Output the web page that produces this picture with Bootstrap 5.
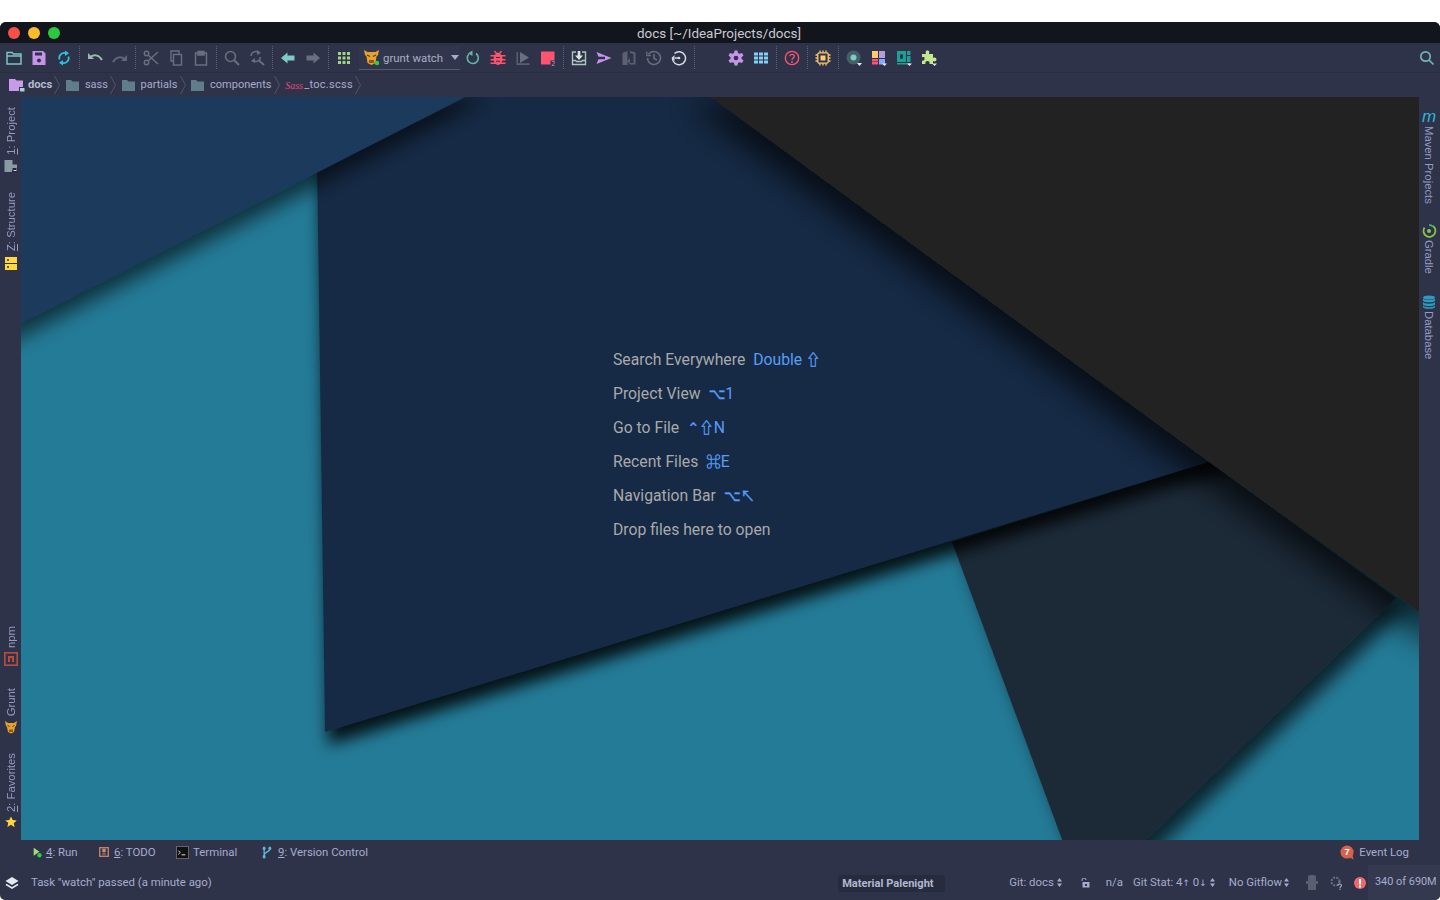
<!DOCTYPE html>
<html lang="en">
<head>
<meta charset="utf-8">
<title>docs</title>
<link href="https://cdn.jsdelivr.net/npm/bootstrap@5.3.0/dist/css/bootstrap.min.css" rel="stylesheet">
<style>
html,body{height:100%;margin:0;background:#fff;overflow:hidden}
body{padding-top:22px;font-family:Roboto,"Liberation Sans",sans-serif}
.ide-window{height:878px;background:#2f3349;border-radius:6px 6px 5px 5px;overflow:hidden;color:#a6accd;font-size:11.4px}
.title-strip{height:21px;flex:none;background:#12151c;color:#c9cbd2;font-size:13.45px;padding-top:3px}
.lights{width:120px;padding-left:8px;gap:8px;margin-top:-3px}
.light{width:12px;height:12px;border-radius:50%}
.light-red{background:#f5504a}.light-amber{background:#fdbb2c}.light-green{background:#2cc83f}
.title-side{width:122px}
.tool-strip{height:30px;flex:none;padding-left:1.5px;padding-right:5px;border-bottom:1px solid #292d40}
.slot{width:25px;height:100%;flex:none}
.slot svg{width:16px;height:16px;display:block}
.rule{width:6px;flex:none;display:flex;justify-content:center;align-items:center;height:100%}
.rule::before{content:"";display:block;height:23px;border-left:1px dotted #5c6178}
.tool-gap{width:26px;flex:none}
.combo{width:101px;height:24px;margin-left:2.5px;margin-top:1px;flex:none;background:#32364c;border-bottom:1px solid #555a72;color:#a9aec8;padding-left:4px;gap:3px;white-space:nowrap}
.combo svg{width:17px;height:17px;flex:none}
.combo span{padding-top:2px}
.caret-down{width:0;height:0;border-left:4.5px solid transparent;border-right:4.5px solid transparent;border-top:5px solid #a6accd;margin-left:5px}
.crumb-strip{height:24px;flex:none;padding-left:9px;color:#a6accd;font-size:11px}
.crumb{height:100%}
.crumb span,.crumb b{padding-top:1px}
.crumb svg.fold{width:13px;height:12px;margin-right:6px;margin-left:5.500px}
.crumb b{font-weight:700;color:#b4b9d2;font-size:11.200px}
.root-icon{margin-right:3px}
.crumb .sass-mark{width:15px;margin-left:5.500px;margin-right:4px;padding-top:0;color:#e0477f;font-family:"Liberation Serif",serif;font-style:italic;font-size:10px;white-space:nowrap;flex:none}
.file-name{letter-spacing:.3px}
.chev{width:6px;height:24px;margin-left:2.200px}
.body-row{flex:1 1 auto;min-height:0}
.side-bar{width:21px;flex:none;padding:10px 0 12px 1px;color:#949cc2;font-family:"Liberation Sans",sans-serif;font-size:11.300px}
.side-right{width:21px;flex:none;padding:13px 1px 0 0;color:#949cc2;font-family:"Liberation Sans",sans-serif;font-size:11.300px;gap:20.500px}
.vert-up{writing-mode:vertical-rl;transform:rotate(180deg);line-height:20px}
.vert-down{writing-mode:vertical-rl;line-height:20px}
.side-bar svg,.side-right svg{width:14px;height:14px;display:block;overflow:visible}
.side-bar svg.star-mark{width:12px;height:12px}
.top-stack{gap:19px}
.low-stack{gap:19px}
.npm-gap{margin-bottom:3px}
.pair{gap:4px}
.pair-wide{gap:6px}
.pair-tight{gap:2px}
.canvas-zone{flex:1 1 auto;position:relative;overflow:hidden;background:#247b97;padding-top:245.500px;padding-right:6px}
.wall{position:absolute;inset:0;width:100%;height:100%}
.hints{position:relative;width:208px;color:#a9a9a9;font-size:15.750px;line-height:34px;white-space:nowrap}
.hints>div{height:34px}
.hints span{color:#589df6;margin-left:4px}
.sym{font-family:"Noto Sans CJK JP","DejaVu Sans",sans-serif;font-style:normal;font-size:14.500px;line-height:0;-webkit-text-stroke:.4px #589df6}
.tabs-strip{height:25px;flex:none;padding-left:33px;padding-right:31px;color:#a6accd}
.tabs-strip u{text-underline-offset:1px}
.tab-run{width:66px;gap:3px}.tab-run svg{width:10px;height:11px}
.tab-todo{width:77px;gap:5px}.tab-todo svg{width:10px;height:10px}
.tab-term{width:86px;gap:4px}.tab-term svg{width:13px;height:13px}
.tab-vcs{gap:6px}.tab-vcs svg{width:10px;height:13px}
.tab-log{gap:4px}.tab-log svg{width:15px;height:15px}
.status-strip{height:35px;flex:none;padding-left:5px;color:#a6accd}
.status-strip svg{display:block;flex:none}
.task-text{margin-left:12px}
.theme-chip{background:#272b3e;border-radius:3px;width:107px;height:17px;font-weight:700;color:#b2b7d0;padding-left:4px;margin-left:auto;font-size:11.100px;line-height:18px;margin-top:1px;white-space:nowrap}
.git-branch{margin-left:64px;gap:3px;white-space:nowrap}
.lock-mark{margin-left:18px}
.na-text{margin-left:16px}
.git-stat{margin-left:10px;gap:3px;white-space:nowrap}
.arrow-mark{font-family:"DejaVu Sans",sans-serif;font-style:normal;font-size:9px}
.git-flow{margin-left:14px;gap:2px;white-space:nowrap}
.ghost-mark{margin-left:17px}
.gear-mark{margin-left:11px}
.err-mark{margin-left:10px}
.mem{background:#353950;height:100%;width:72px;padding-left:7px;margin-left:2px;color:#a6accd;white-space:nowrap;flex:none;font-size:10.900px}
</style>
</head>
<body>
<div class="ide-window d-flex flex-column">

  <div class="title-strip d-flex align-items-center">
    <div class="lights d-flex align-items-center">
      <div class="light light-red"></div>
      <div class="light light-amber"></div>
      <div class="light light-green"></div>
    </div>
    <div class="flex-grow-1 text-center">docs [~/IdeaProjects/docs]</div>
    <div class="title-side"></div>
  </div>

  <div class="tool-strip d-flex align-items-center">
    <div class="slot d-flex align-items-center justify-content-center"><svg viewBox="0 0 16 16"><path d="M1 14V2.5h5L7.5 4H15v10zM1 6h14" fill="none" stroke="#7cc5c4" stroke-width="1.5"/></svg></div>
    <div class="slot d-flex align-items-center justify-content-center"><svg viewBox="0 0 16 16"><path d="M1.5 1h10.5l2.500 2.500V15h-13z" fill="#c792ea"/><rect x="4" y="2.500" width="7" height="3" fill="#2f3349"/><circle cx="8" cy="10.500" r="2" fill="#2f3349"/></svg></div>
    <div class="slot d-flex align-items-center justify-content-center"><svg viewBox="0 0 16 16"><path d="M3.500 9.500A5 5 0 0 1 10 3.300M12.500 6.500A5 5 0 0 1 6 12.700" fill="none" stroke="#2bc4e2" stroke-width="1.700"/><path d="M9 .5l4 2.800-4 2.700zM7 10l-4 2.700 4 2.800z" fill="#2bc4e2"/></svg></div>
    <div class="rule"></div>
    <div class="slot d-flex align-items-center justify-content-center"><svg viewBox="0 0 16 16"><path d="M1 3v6h6z" fill="#9ab8b0"/><path d="M3 7.500C6 4 12 4.500 15 10" fill="none" stroke="#9ab8b0" stroke-width="2"/></svg></div>
    <div class="slot d-flex align-items-center justify-content-center"><svg viewBox="0 0 16 16"><path d="M15 5v6H9z" fill="#616678"/><path d="M13 9.500C10 6 4 6.500 1 12" fill="none" stroke="#616678" stroke-width="2"/></svg></div>
    <div class="rule"></div>
    <div class="slot d-flex align-items-center justify-content-center"><svg viewBox="0 0 16 16" fill="none" stroke="#696e80" stroke-width="1.500"><circle cx="3.500" cy="3.500" r="2.200"/><circle cx="3.500" cy="12.500" r="2.200"/><path d="M5 5l10 9M5 11L15 2"/></svg></div>
    <div class="slot d-flex align-items-center justify-content-center"><svg viewBox="0 0 16 16" fill="none" stroke="#696e80" stroke-width="1.400"><path d="M11 4V1H3v10h2"/><rect x="5.500" y="4.500" width="8" height="10.500"/></svg></div>
    <div class="slot d-flex align-items-center justify-content-center"><svg viewBox="0 0 16 16" fill="none" stroke="#696e80" stroke-width="1.500"><path d="M5 3H2.500v12h11V3H11"/><path d="M5 1.500h6V5H5z" fill="#696e80"/></svg></div>
    <div class="rule"></div>
    <div class="slot d-flex align-items-center justify-content-center"><svg viewBox="0 0 16 16" fill="none" stroke="#696e80" stroke-width="1.600"><circle cx="6.500" cy="6.500" r="5"/><path d="M10 10l5 5" stroke-width="2"/></svg></div>
    <div class="slot d-flex align-items-center justify-content-center"><svg viewBox="0 0 16 16" fill="none" stroke="#696e80" stroke-width="1.500"><path d="M2 6A5 5 0 0 1 10 2.500M11.500 7A5 5 0 0 1 3.500 10.500"/><path d="M10 10.500l5 4.500" stroke-width="2"/><path d="M8 0l4 3-4 2zM6 8l-4 3 4 2z" fill="#696e80" stroke="none"/></svg></div>
    <div class="rule"></div>
    <div class="slot d-flex align-items-center justify-content-center"><svg viewBox="0 0 16 16"><path d="M1 8l6.500-5.500V5.500h7v5h-7v3z" fill="#80cbc4"/></svg></div>
    <div class="slot d-flex align-items-center justify-content-center"><svg viewBox="0 0 16 16"><path d="M15 8L8.500 2.500V5.500h-7v5h7v3z" fill="#696e80"/></svg></div>
    <div class="rule"></div>
    <div class="slot d-flex align-items-center justify-content-center"><svg viewBox="0 0 16 16" fill="#a0d68a"><path d="M2 2h3v3H2zM6.500 2h3v3h-3zM11 2h3v3h-3zM2 6.500h3v3H2zM6.500 6.500h3v3h-3zM11 6.500h3v3h-3zM2 11h3v3H2zM6.500 11h3v3h-3zM11 11h3v3h-3z"/></svg></div>
    <div class="combo d-flex align-items-center">
      <svg viewBox="0 0 17 17"><path d="M1 1l3.500 2h8L16 1l-1 5-1.500 1.500-1 6.500-4 2-4-2-1-6.500L2 6z" fill="#e4a32c"/><path d="M4 6l3 1.500M13 6l-3 1.500" stroke="#5b3a10" stroke-width="1.300"/><path d="M6 11h5v3H6z" fill="#8a5a1c"/><circle cx="14" cy="14" r="2.200" fill="#27d045"/></svg>
      <span>grunt watch</span><i class="caret-down"></i>
    </div>
    <div class="slot d-flex align-items-center justify-content-center"><svg viewBox="0 0 16 16"><path d="M11 3.500A5.500 5.500 0 1 1 4 4" fill="none" stroke="#5fb7a9" stroke-width="1.600"/><path d="M7.500 .5v5.500L3 3.200z" fill="#5fb7a9"/></svg></div>
    <div class="slot d-flex align-items-center justify-content-center"><svg viewBox="0 0 16 16" fill="#ff5370"><ellipse cx="8" cy="9" rx="4.500" ry="6"/><path d="M0.500 5h15v1.500H.5zM.5 9h15v1.500H.5zM.5 12.500h15V14H.5z"/><path d="M4.500 1l2 2.500h3l2-2.500" fill="none" stroke="#ff5370" stroke-width="1.300"/><path d="M6 7h4v1H6zM6 10.800h4v1H6z" fill="#2f3349"/></svg></div>
    <div class="slot d-flex align-items-center justify-content-center"><svg viewBox="0 0 16 16"><path d="M1.500 2v13h13v-1.700H3V2z" fill="#5a5f70"/><path d="M5 2l9 5.500L5 13z" fill="#6a6f80"/></svg></div>
    <div class="slot d-flex align-items-center justify-content-center"><svg viewBox="0 0 16 16"><rect x="1" y="1.500" width="13.500" height="13" fill="#ff5370"/><rect x="10.500" y="10.500" width="5.500" height="5.500" fill="#2f3349"/><text x="13.200" y="15.500" font-size="6.500" text-anchor="middle" fill="#a6accd" font-family="Liberation Sans">2</text></svg></div>
    <div class="rule"></div>
    <div class="slot d-flex align-items-center justify-content-center"><svg viewBox="0 0 16 16" fill="none" stroke="#aac7bd" stroke-width="1.400"><path d="M5 2H1.500v12.500h13V2H11"/><path d="M1.500 10.500h3l1 1h5l1-1h3"/><path d="M6.700 1h2.600v4.500H12L8 10 4 5.500h2.700z" fill="#dbe6e2" stroke="none"/></svg></div>
    <div class="slot d-flex align-items-center justify-content-center"><svg viewBox="0 0 16 16"><path d="M.5 2L15.500 8 .5 14l2-4.700H9V6.700H2.500z" fill="#c792ea"/></svg></div>
    <div class="slot d-flex align-items-center justify-content-center"><svg viewBox="0 0 16 16"><path d="M1.500 3l5-2v14h-5z" fill="#5c6070"/><path d="M9 1l5.500 1.500v12H9v-1.500h3.500V4L9 3zM6 11l3-3v6z" fill="#5c6070"/></svg></div>
    <div class="slot d-flex align-items-center justify-content-center"><svg viewBox="0 0 16 16" fill="none" stroke="#676c7e" stroke-width="1.600"><path d="M2.500 4.500A6.500 6.500 0 1 1 1.500 8"/><path d="M8 4v4.500l3 1.500"/><path d="M.8 1.500v4.200H5" stroke-width="1.300"/></svg></div>
    <div class="slot d-flex align-items-center justify-content-center"><svg viewBox="0 0 16 16" fill="none" stroke="#d6dbe6" stroke-width="1.500"><path d="M3.500 3.500A6.500 6.500 0 1 1 1.500 8"/><circle cx="8" cy="8" r="1.300" fill="#d6dbe6" stroke="none"/><path d="M4 8h3"/><path d="M.5 8l3-3v6z" fill="#d6dbe6" stroke="none"/></svg></div>
    <div class="rule"></div>
    <div class="tool-gap"></div>
    <div class="slot d-flex align-items-center justify-content-center"><svg viewBox="0 0 16 16"><path d="M6.500 .5h3L10 3l1.500.8L14 3l1.500 2.500-2 1.700v1.600l2 1.700L14 13l-2.500-.8L10 13l-.5 2.500h-3L6 13l-1.500-.8L2 13 .5 10.500l2-1.700V7.200l-2-1.700L2 3l2.500.8L6 3z" fill="#c792ea"/><circle cx="8" cy="8" r="2.300" fill="#2f3349"/></svg></div>
    <div class="slot d-flex align-items-center justify-content-center"><svg viewBox="0 0 16 16" fill="#82d2f7"><path d="M1 2.500h4v3H1zM6 2.500h4v3H6zM11 2.500h4v3h-4zM1 6.500h4v3H1zM6 6.500h4v3H6zM11 6.500h4v3h-4zM1 10.500h4v3H1zM6 10.500h4v3H6zM11 10.500h4v3h-4z"/></svg></div>
    <div class="rule"></div>
    <div class="slot d-flex align-items-center justify-content-center"><svg viewBox="0 0 16 16"><circle cx="8" cy="8" r="6.700" fill="none" stroke="#ff5370" stroke-width="1.300"/><path d="M5.800 6.200C6 3.800 10.200 3.800 10.300 6.200 10.300 8 8 8 8 10" fill="none" stroke="#ff5370" stroke-width="1.300"/><circle cx="8" cy="12" r=".9" fill="#ff5370"/></svg></div>
    <div class="rule"></div>
    <div class="slot d-flex align-items-center justify-content-center"><svg viewBox="0 0 16 16" fill="none" stroke="#ffcb6b" stroke-width="1.300"><rect x="2.800" y="2.800" width="10.400" height="10.400" rx="1.500"/><rect x="5.500" y="5.500" width="5" height="5" fill="#ffcb6b" stroke="none"/><path d="M5 .5v2M8 .5v2M11 .5v2M5 13.500v2M8 13.500v2M11 13.500v2M.5 5h2M.5 8h2M.5 11h2M13.500 5h2M13.500 8h2M13.500 11h2"/></svg></div>
    <div class="rule"></div>
    <div class="slot d-flex align-items-center justify-content-center"><svg viewBox="0 0 16 16"><circle cx="7.500" cy="7.500" r="7" fill="#43606a"/><circle cx="7.500" cy="7.500" r="3" fill="#80cbc4"/><path d="M11 13h5l-2.500 3z" fill="#e8e8ee"/></svg></div>
    <div class="slot d-flex align-items-center justify-content-center"><svg viewBox="0 0 16 16"><rect x="1" y="1" width="6" height="7" fill="#ffcb6b"/><rect x="8" y="1" width="6" height="7" fill="#b39ddb"/><rect x="1" y="9" width="6" height="2.500" fill="#ff5370"/><rect x="1" y="12" width="6" height="2.500" fill="#ff5370"/><rect x="8" y="9" width="6" height="5.500" fill="#82aaff"/><path d="M11 13.500h5L13.500 16z" fill="#e8e8ee"/></svg></div>
    <div class="slot d-flex align-items-center justify-content-center"><svg viewBox="0 0 16 16"><rect x="1" y="1" width="9" height="11" fill="#1f9e96"/><rect x="4" y="4" width="3" height="5" rx="1.500" fill="#2f3349"/><rect x="11" y="1" width="3.500" height="4" fill="#1f9e96"/><rect x="11" y="6" width="3.500" height="6" fill="#1f9e96"/><rect x="1" y="13" width="13.500" height="1.500" fill="#1f9e96"/><path d="M11 13.500h5L13.500 16z" fill="#e8e8ee"/></svg></div>
    <div class="slot d-flex align-items-center justify-content-center"><svg viewBox="0 0 16 16"><path d="M1 4h4C4 1 5.500 .5 6.500 .5S9 1 8 4h4v4c2-1 3.500 0 3.500 1.500S14 12 12 11v3H8.500c.7-2-.5-3-2-3s-2.700 1-2 3H1v-3.500c2 .7 2.500-.5 2.500-2S3 6.700 1 7.500z" fill="#c3e88d"/><path d="M11 13.500h5L13.500 16z" fill="#e8e8ee"/></svg></div>
    <div class="flex-grow-1"></div>
    <div class="d-flex align-items-center"><svg width="16" height="16" viewBox="0 0 16 16" fill="none" stroke="#6fb4b6" stroke-width="1.700"><circle cx="6.500" cy="6.500" r="4.700"/><path d="M10 10l4.500 4.500"/></svg></div>
  </div>

  <div class="crumb-strip d-flex align-items-center">
    <div class="crumb d-flex align-items-center">
      <svg width="16" height="14" viewBox="0 0 16 14" class="root-icon"><path d="M0 1h6l1.500 1.500H14V13H0z" fill="#c79be8"/><rect x="10" y="9" width="6" height="5" fill="#2f3349"/><rect x="11" y="10" width="4.500" height="3.500" fill="#a9d4d6"/></svg>
      <b>docs</b>
      <svg class="chev" viewBox="0 0 6 24" fill="none" stroke="#50556c"><path d="M.5 3L5.500 12 .5 21"/></svg>
    </div>
    <div class="crumb d-flex align-items-center">
      <svg class="fold" viewBox="0 0 13 12"><path d="M0 1h5l1.500 1.500H13V12H0z" fill="#607d8b"/></svg><span>sass</span>
      <svg class="chev" viewBox="0 0 6 24" fill="none" stroke="#50556c"><path d="M.5 3L5.500 12 .5 21"/></svg>
    </div>
    <div class="crumb d-flex align-items-center">
      <svg class="fold" viewBox="0 0 13 12"><path d="M0 1h5l1.500 1.500H13V12H0z" fill="#607d8b"/></svg><span>partials</span>
      <svg class="chev" viewBox="0 0 6 24" fill="none" stroke="#50556c"><path d="M.5 3L5.500 12 .5 21"/></svg>
    </div>
    <div class="crumb d-flex align-items-center">
      <svg class="fold" viewBox="0 0 13 12"><path d="M0 1h5l1.500 1.500H13V12H0z" fill="#607d8b"/></svg><span>components</span>
      <svg class="chev" viewBox="0 0 6 24" fill="none" stroke="#50556c"><path d="M.5 3L5.500 12 .5 21"/></svg>
    </div>
    <div class="crumb d-flex align-items-center">
      <span class="sass-mark">Sass</span><span class="file-name">_toc.scss</span>
      <svg class="chev" viewBox="0 0 6 24" fill="none" stroke="#50556c"><path d="M.5 3L5.500 12 .5 21"/></svg>
    </div>
  </div>

  <div class="body-row d-flex">
    <div class="side-bar d-flex flex-column justify-content-between align-items-center">
      <div class="top-stack d-flex flex-column align-items-center">
        <div class="pair d-flex flex-column align-items-center">
          <div class="vert-up"><u>1</u>: Project</div>
          <svg viewBox="0 0 14 14"><path d="M.5 1v12h7l1-1.500V11H13V5.500H8.500V1z" fill="#8a9aa6"/><rect x="8.500" y="9" width="4" height="4" fill="#23263a"/><rect x="9.500" y="11" width="3" height="1" fill="#d7d9e2"/></svg>
        </div>
        <div class="pair-wide d-flex flex-column align-items-center">
          <div class="vert-up"><u>Z</u>: Structure</div>
          <svg viewBox="0 0 14 14"><rect x="1" y="0" width="12" height="6" fill="#ffd740"/><rect x="1" y="7" width="12" height="6" fill="#ffd740"/><circle cx="4" cy="3" r="1" fill="#2f3349"/><circle cx="4" cy="10" r="1" fill="#2f3349"/></svg>
        </div>
      </div>
      <div class="low-stack d-flex flex-column align-items-center">
        <div class="pair npm-gap d-flex flex-column align-items-center">
          <div class="vert-up">npm</div>
          <svg viewBox="0 0 14 14"><rect x=".8" y=".8" width="12.400" height="12.400" fill="none" stroke="#b84d3e" stroke-width="1.600"/><path d="M4 10V4h6v6H8V6H6v4z" fill="#b84d3e"/></svg>
        </div>
        <div class="pair d-flex flex-column align-items-center">
          <div class="vert-up">Grunt</div>
          <svg viewBox="0 0 14 14"><path d="M1 1l3 2h6l3-2-1 5-1 1-1 5-3 1.500L4 12 3 7 2 6z" fill="#e4a32c"/><path d="M3.500 5.500l2 1M10.500 5.500l-2 1" stroke="#5b3a10"/><path d="M5 9.500h4V12H5z" fill="#8a5a1c"/></svg>
        </div>
        <div class="pair d-flex flex-column align-items-center">
          <div class="vert-up"><u>2</u>: Favorites</div>
          <svg class="star-mark" viewBox="0 0 14 14"><path d="M7 .5l2 4.300 4.700.5-3.500 3.200 1 4.700L7 10.300 2.800 12.700l1-4.700L.3 5.300 5 4.800z" fill="#ffd740"/></svg>
        </div>
      </div>
    </div>

    <div class="canvas-zone d-flex justify-content-center">
      <svg class="wall" viewBox="21 97 1398 743" preserveAspectRatio="none">
        <defs>
          <filter id="s1" filterUnits="userSpaceOnUse" x="0" y="50" width="1500" height="900"><feDropShadow dx="10" dy="10" stdDeviation="9" flood-color="#000" flood-opacity=".7"/></filter>
          <filter id="s2" filterUnits="userSpaceOnUse" x="0" y="50" width="1500" height="900"><feDropShadow dx="3" dy="13" stdDeviation="8" flood-color="#000" flood-opacity=".85"/></filter>
          <filter id="s3" filterUnits="userSpaceOnUse" x="0" y="50" width="1500" height="900"><feDropShadow dx="5" dy="11" stdDeviation="10" flood-color="#000" flood-opacity=".6"/></filter>
          <filter id="s4" filterUnits="userSpaceOnUse" x="0" y="50" width="1500" height="900"><feDropShadow dx="-11" dy="15" stdDeviation="16" flood-color="#000" flood-opacity=".7"/></filter>
        </defs>
        <polygon points="952,542 1077,880 1105,880 1396,598 1209,462" fill="#1f2b38" filter="url(#s1)"/>
        <polygon points="316,87 1300,87 1300,434 325,732" fill="#152b45" filter="url(#s2)"/>
        <polygon points="0,334 485,87 0,87" fill="#1a3a5c" filter="url(#s3)"/>
        <polygon points="697,87 1450,87 1450,634 1209,462" fill="#242424" filter="url(#s4)"/>
      </svg>
      <div class="hints">
        <div>Search Everywhere <span>Double <i class="sym">⇧</i></span></div>
        <div>Project View <span><i class="sym">⌥</i>1</span></div>
        <div>Go to File <span><i class="sym">⌃⇧</i>N</span></div>
        <div>Recent Files <span><i class="sym">⌘</i>E</span></div>
        <div>Navigation Bar <span><i class="sym">⌥↖</i></span></div>
        <div>Drop files here to open</div>
      </div>
    </div>

    <div class="side-right d-flex flex-column align-items-center">
      <div class="pair-tight d-flex flex-column align-items-center">
        <svg viewBox="0 0 14 14"><text x="7" y="12" text-anchor="middle" font-size="17" font-style="italic" font-family="Liberation Sans" fill="#2bb5d8">m</text></svg>
        <div class="vert-down">Maven Projects</div>
      </div>
      <div class="pair-tight d-flex flex-column align-items-center">
        <svg viewBox="0 0 14 14"><path d="M2.500 3.500A6 6 0 1 0 11 2" fill="none" stroke="#8bc34a" stroke-width="1.800"/><circle cx="7" cy="7" r="2" fill="#8bc34a"/><path d="M7 1a6 6 0 0 1 4 1.500" stroke="#2bb673" stroke-width="1.800" fill="none"/></svg>
        <div class="vert-down">Gradle</div>
      </div>
      <div class="pair-tight d-flex flex-column align-items-center">
        <svg viewBox="0 0 14 14"><ellipse cx="7" cy="2.500" rx="6" ry="2" fill="#2e9cc0"/><path d="M1 3v2.500c0 1 2.500 1.800 6 1.800s6-.8 6-1.800V3c0 1-2.500 2-6 2s-6-1-6-2zM1 6.800v2.500c0 1 2.500 1.800 6 1.800s6-.8 6-1.800V6.800c0 1-2.500 2-6 2s-6-1-6-2zM1 10.300V12c0 1 2.500 1.800 6 1.800s6-.8 6-1.800v-1.700c0 1-2.500 2-6 2s-6-1-6-2z" fill="#2e9cc0"/></svg>
        <div class="vert-down">Database</div>
      </div>
    </div>
  </div>

  <div class="tabs-strip d-flex align-items-center">
    <div class="tab-run d-flex align-items-center">
      <svg viewBox="0 0 14 14" preserveAspectRatio="none"><path d="M1 1l8 5-8 5z" fill="#a8d878"/><circle cx="9" cy="10.500" r="3" fill="#27d045"/></svg><span><u>4</u>: Run</span>
    </div>
    <div class="tab-todo d-flex align-items-center">
      <svg viewBox="0 0 14 14"><rect x="1" y="1" width="12" height="12" fill="none" stroke="#c98a6e" stroke-width="1.800"/><path d="M4.500 2.500h5v5h-5zM4.500 9h5v1.500h-5z" fill="#c98a6e"/></svg><span><u>6</u>: TODO</span>
    </div>
    <div class="tab-term d-flex align-items-center">
      <svg viewBox="0 0 14 14"><rect x=".5" y=".5" width="13" height="13" fill="#111" stroke="#6a6a6a"/><path d="M2.500 5l2 2-2 2" stroke="#eee" fill="none"/><path d="M6 9.500h4" stroke="#eee"/></svg><span>Terminal</span>
    </div>
    <div class="tab-vcs d-flex align-items-center">
      <svg viewBox="0 0 14 14" preserveAspectRatio="none"><circle cx="3" cy="2.500" r="2" fill="#5fb6dc"/><circle cx="3" cy="11.500" r="2" fill="#5fb6dc"/><circle cx="11" cy="2.500" r="2" fill="#5fb6dc"/><path d="M3 3v8M11 3c0 4-8 3-8 7" fill="none" stroke="#5fb6dc" stroke-width="1.800"/></svg><span><u>9</u>: Version Control</span>
    </div>
    <div class="tab-log ms-auto d-flex align-items-center">
      <svg viewBox="0 0 16 16"><circle cx="7.500" cy="7.500" r="7" fill="#d9614c"/><path d="M10 13l4.500 2.500L13 10z" fill="#d9614c"/><text x="7.500" y="11" text-anchor="middle" font-size="10" font-weight="700" fill="#fff" font-family="Liberation Sans">7</text></svg><span>Event Log</span>
    </div>
  </div>

  <div class="status-strip d-flex align-items-center">
    <svg width="14" height="14" viewBox="0 0 14 14"><path d="M7 1l6.500 4L7 9 .5 5z" fill="#e6e8f0"/><path d="M1.500 7.800L7 11l5.500-3.200L13.500 9 7 13 .5 9z" fill="#e6e8f0"/></svg>
    <span class="task-text">Task "watch" passed (a minute ago)</span>
    <div class="theme-chip">Material Palenight</div>
    <div class="git-branch d-flex align-items-center">Git: docs <svg width="5" height="9" viewBox="0 0 5 9" fill="#a6accd"><path d="M2.500 0L5 3.500H0zM2.500 9L0 5.500h5z"/></svg></div>
    <svg class="lock-mark" width="10" height="10" viewBox="0 0 10 10"><path d="M2 3V2a2 2 0 0 1 4 0" fill="none" stroke="#a6accd"/><rect x="2.500" y="4" width="7" height="5.500" fill="#a6accd"/><rect x="5" y="6" width="2" height="2" fill="#2f3349"/></svg>
    <span class="na-text">n/a</span>
    <div class="git-stat d-flex align-items-center"><span>Git Stat: 4<i class="arrow-mark">↑</i> 0<i class="arrow-mark">↓</i></span> <svg width="5" height="9" viewBox="0 0 5 9" fill="#a6accd"><path d="M2.500 0L5 3.500H0zM2.500 9L0 5.500h5z"/></svg></div>
    <div class="git-flow d-flex align-items-center">No Gitflow <svg width="5" height="9" viewBox="0 0 5 9" fill="#a6accd"><path d="M2.500 0L5 3.500H0zM2.500 9L0 5.500h5z"/></svg></div>
    <svg class="ghost-mark" width="12" height="15" viewBox="0 0 12 15"><path d="M2 2a2 2 0 0 1 2-2h4a2 2 0 0 1 2 2v4h2v3h-2v6H2V9H0V6h2z" fill="#5a5f70"/></svg>
    <svg class="gear-mark" width="15" height="15" viewBox="0 0 15 15"><circle cx="6.500" cy="6.500" r="4" fill="none" stroke="#686d80" stroke-width="2.200" stroke-dasharray="2 1.200"/><path d="M9 10.500c0-2 3.500-2 3.500 0 0 1.200-1.500 1.200-1.500 2.500" fill="none" stroke="#a6accd" stroke-width="1.100"/><circle cx="11" cy="14.300" r=".7" fill="#a6accd"/></svg>
    <svg class="err-mark" width="12" height="12" viewBox="0 0 12 12"><circle cx="6" cy="6" r="6" fill="#f0696a"/><rect x="5" y="2" width="2" height="5.500" fill="#fff"/><rect x="5" y="8.500" width="2" height="2" fill="#fff"/></svg>
    <div class="mem d-flex align-items-center">340 of 690M</div>
  </div>

</div>
<script src="https://cdn.jsdelivr.net/npm/bootstrap@5.3.0/dist/js/bootstrap.bundle.min.js"></script>
</body>
</html>
